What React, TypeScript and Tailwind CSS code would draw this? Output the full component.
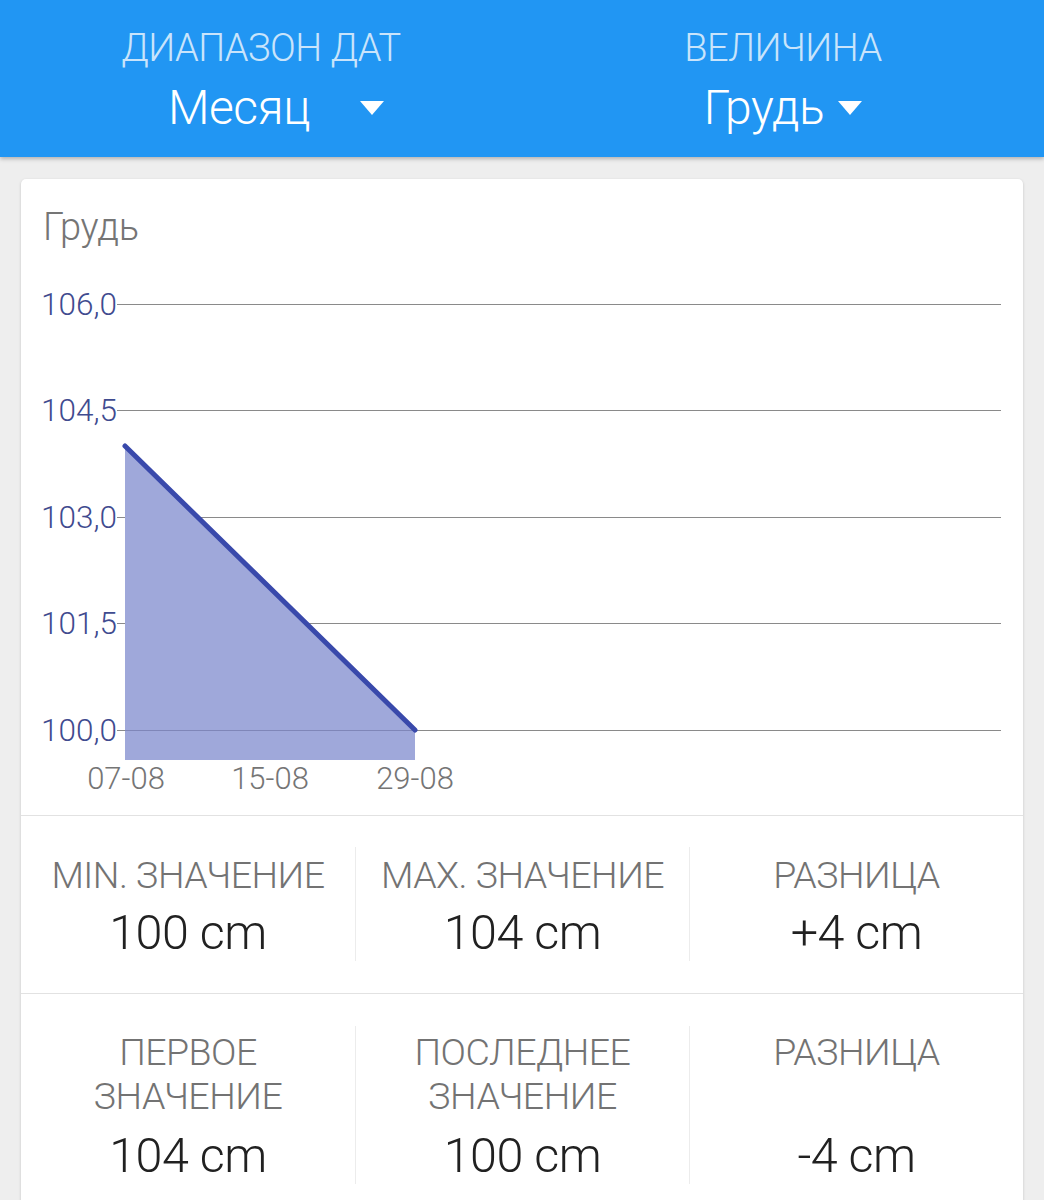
import React from "react";

const Caret = () => (
  <svg width="24" height="15" viewBox="0 0 24 15" className="shrink-0">
    <polygon points="0,0 24,0 12,14" fill="#ffffff" />
  </svg>
);

const yTicks = [
  { label: "106,0", y: 57 },
  { label: "104,5", y: 163 },
  { label: "103,0", y: 270 },
  { label: "101,5", y: 376 },
  { label: "100,0", y: 483 },
];

const xTicks = [
  { label: "07-08", x: 105 },
  { label: "15-08", x: 249 },
  { label: "29-08", x: 394 },
];

function Stat({ label, value, twoLine }: { label: React.ReactNode; value: string; twoLine?: boolean }) {
  return (
    <div className="flex flex-col items-center text-center">
      <div
        className={`text-[37.5px] leading-[44px] font-light text-[#737373] tracking-[-0.5px] ${
          twoLine ? "h-[88px]" : ""
        }`}
      >
        {label}
      </div>
      <div className={`text-[48.5px] leading-[56px] font-light text-[#212121] tracking-[-0.5px] ${twoLine ? "mt-[10px]" : "mt-[8px]"}`}>
        {value}
      </div>
    </div>
  );
}

export default function App() {
  return (
    <div className="min-h-[1200px] bg-[#eeeeee] overflow-hidden" style={{ fontFamily: "Roboto, 'Noto Sans', sans-serif" }}>
      {/* Header */}
      <div className="h-[157px] bg-[#2196F3] shadow-[0_2px_4px_rgba(0,0,0,0.25)] grid grid-cols-2 relative z-10">
        <div className="flex flex-col items-center pt-[25px]">
          <div className="text-[38px] leading-[46px] font-light text-[#c9e4fb] tracking-[-0.5px]">ДИАПАЗОН ДАТ</div>
          <div className="flex items-center pl-[30px] mt-[12px]">
            <span className="text-[48px] leading-[50px] font-light text-white tracking-[-0.5px]">Месяц</span>
            <span className="ml-[50px]">
              <Caret />
            </span>
          </div>
        </div>
        <div className="flex flex-col items-center pt-[25px]">
          <div className="text-[38px] leading-[46px] font-light text-[#c9e4fb] tracking-[-0.5px]">ВЕЛИЧИНА</div>
          <div className="flex items-center mt-[12px]">
            <span className="text-[48px] leading-[50px] font-light text-white tracking-[-0.5px]">Грудь</span>
            <span className="ml-[14px]">
              <Caret />
            </span>
          </div>
        </div>
      </div>

      {/* Card */}
      <div className="mx-[21px] mt-[22px] bg-white rounded-[5px] shadow-[0_1px_3px_rgba(0,0,0,0.18)]">
        <div className="pt-[28px] pl-[22px] text-[38px] leading-[40px] font-light text-[#757575] tracking-[-0.3px]">Грудь</div>
        <svg width="1002" height="568" viewBox="0 0 1002 568" className="block">
          {yTicks.map((t) => (
            <g key={t.label}>
              <line x1="96" x2="980" y1={t.y + 0.5} y2={t.y + 0.5} stroke="#8a8a8a" strokeWidth="1" />
              <text
                x="96"
                y={t.y}
                textAnchor="end"
                dominantBaseline="central"
                fontSize="31.5"
                fontWeight="300"
                fill="#3f4b8f"
                fontFamily="Roboto, sans-serif"
              >
                {t.label}
              </text>
            </g>
          ))}
          <polygon points="104,199 394,483 394,513 104,513" fill="#9FA8DA" />
          <line x1="104" y1="483.5" x2="394" y2="483.5" stroke="#7f86b8" strokeWidth="1" />
          <line x1="104" y1="199" x2="394" y2="483" stroke="#3949AB" strokeWidth="5" strokeLinecap="round" />
          {xTicks.map((t) => (
            <text
              key={t.label}
              x={t.x}
              y="531"
              textAnchor="middle"
              dominantBaseline="central"
              fontSize="31"
              fontWeight="300"
              fill="#757575"
              fontFamily="Roboto, sans-serif"
            >
              {t.label}
            </text>
          ))}
        </svg>

        <div className="h-[1px] bg-[#e2e2e2]" />

        {/* Row 1 */}
        <div className="grid grid-cols-3 pt-[31px] pb-[32px]">
          <div className="pt-[6px]">
            <Stat label="MIN. ЗНАЧЕНИЕ" value="100 cm" />
          </div>
          <div className="pt-[6px] border-l border-[#ececec]">
            <Stat label="MAX. ЗНАЧЕНИЕ" value="104 cm" />
          </div>
          <div className="pt-[6px] border-l border-[#ececec]">
            <Stat label="РАЗНИЦА" value="+4 cm" />
          </div>
        </div>

        <div className="h-[1px] bg-[#e2e2e2]" />

        {/* Row 2 */}
        <div className="grid grid-cols-3 pt-[32px] pb-[32px]">
          <div className="pt-[4px]">
            <Stat
              twoLine
              label={
                <>
                  ПЕРВОЕ
                  <br />
                  ЗНАЧЕНИЕ
                </>
              }
              value="104 cm"
            />
          </div>
          <div className="pt-[4px] border-l border-[#ececec]">
            <Stat
              twoLine
              label={
                <>
                  ПОСЛЕДНЕЕ
                  <br />
                  ЗНАЧЕНИЕ
                </>
              }
              value="100 cm"
            />
          </div>
          <div className="pt-[4px] border-l border-[#ececec]">
            <Stat twoLine label="РАЗНИЦА" value="-4 cm" />
          </div>
        </div>
      </div>
    </div>
  );
}
